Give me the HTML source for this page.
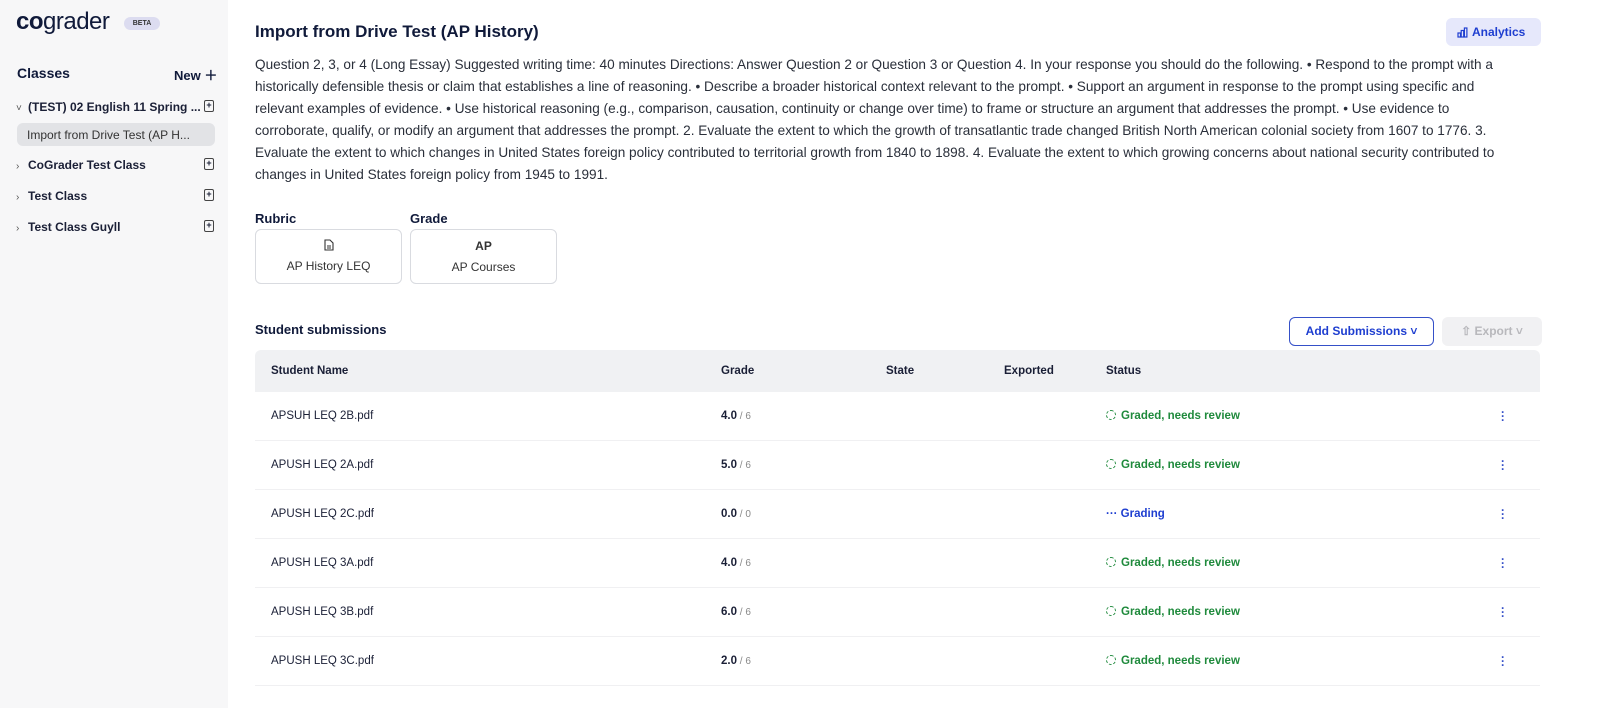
<!DOCTYPE html>
<html><head><meta charset="utf-8"><style>
*{box-sizing:border-box;margin:0;padding:0}
body{width:1600px;height:708px;overflow:hidden;background:#fff;font-family:"Liberation Sans",sans-serif;color:#1a1f36;position:relative}
.sb{position:absolute;left:0;top:0;width:228px;height:708px;background:#f7f7f8}
.logo{position:absolute;left:16px;top:8px;font-size:24px;color:#101a3a;letter-spacing:-0.5px}
.logo b{font-weight:700}
.beta{position:absolute;left:124px;top:17px;width:36px;height:13px;border-radius:7px;background:#dcdcf0;font-size:7px;font-weight:700;text-align:center;line-height:13px;color:#333}
.cls{position:absolute;left:17px;top:65px;font-size:14px;font-weight:700;color:#101a3a}
.new{position:absolute;left:174px;top:65px;font-size:13px;font-weight:700;color:#101a3a}
.it{position:absolute;left:16px;font-size:12px;font-weight:700;color:#1a1f36}
.it .ch{display:inline-block;width:12px;font-weight:400;color:#555;font-size:10px}
.fi{position:absolute;left:204px;width:10px;height:12px;border:1.3px solid #444;border-radius:2px;font-size:9px;line-height:9px;text-align:center;font-weight:700}
.sel{position:absolute;left:17px;top:123px;width:198px;height:23px;background:#e2e3e6;border-radius:6px;font-size:12px;padding:5px 10px;color:#333}
h1{position:absolute;left:255px;top:22px;font-size:17px;font-weight:700;color:#101a3a}
.an{position:absolute;left:1446px;top:18px;width:95px;height:28px;background:#e6e8fb;border-radius:6px;color:#1e3ed0;font-size:12px;font-weight:700;line-height:28px;padding-left:26px}
.p{position:absolute;left:255px;top:54px;font-size:13.6px;line-height:22px;color:#2a2f3a;white-space:nowrap}
.lab{position:absolute;font-size:13px;font-weight:700;color:#101a3a;top:211px}
.card{position:absolute;top:229px;width:147px;height:55px;border:1px solid #d9dbe0;border-radius:6px;text-align:center;font-size:12px;color:#333}
.ss{position:absolute;left:255px;top:322px;font-size:13px;font-weight:700;color:#101a3a}
.add{position:absolute;left:1289px;top:317px;width:145px;height:29px;border:1px solid #3550c8;border-radius:6px;color:#1e3ed0;font-size:12px;font-weight:700;line-height:27px;text-align:center}
.exp{position:absolute;left:1442px;top:317px;width:100px;height:29px;background:#f1f1f3;border-radius:6px;color:#b8b8bc;font-size:12px;font-weight:700;line-height:29px;text-align:center}
.tbl{position:absolute;left:255px;top:350px;width:1285px}
.hd{height:42px;background:#f0f1f3;border-radius:6px 6px 0 0;position:relative;font-size:11.5px;font-weight:700;color:#1a1f36}
.row{height:49px;border-bottom:1px solid #f0f0f2;position:relative;font-size:11.5px;color:#1a1f36}
.c{position:absolute;top:0;line-height:42px}
.row .c{line-height:48px}
.g b{font-weight:700}
.g span{color:#888;font-size:10px}
.st{color:#1f8a3c;font-weight:700}
.st i{display:inline-block;width:10px;height:10px;border:1.5px dashed #1f8a3c;border-radius:50%;vertical-align:-1px;margin-right:5px}
.gr{color:#1e3ed0;font-weight:700}
.dots{position:absolute;left:1246px;top:18px;color:#3550c8;font-size:12px;line-height:4px;width:4px;font-weight:700}
</style></head><body>
<div class="sb">
<div class="logo"><b>co</b>grader</div><div class="beta">BETA</div>
<div class="cls">Classes</div><div class="new">New ＋</div>
<div class="it" style="top:100px"><span class="ch">˅</span>(TEST) 02 English 11 Spring ...</div><div class="fi" style="top:100px">+</div>
<div class="sel">Import from Drive Test (AP H...</div>
<div class="it" style="top:158px"><span class="ch">›</span>CoGrader Test Class</div><div class="fi" style="top:158px">+</div>
<div class="it" style="top:189px"><span class="ch">›</span>Test Class</div><div class="fi" style="top:189px">+</div>
<div class="it" style="top:220px"><span class="ch">›</span>Test Class Guyll</div><div class="fi" style="top:220px">+</div>
</div>
<h1>Import from Drive Test (AP History)</h1>
<div class="an"><svg style="position:absolute;left:11px;top:9px" width="11" height="11" viewBox="0 0 11 11" fill="none" stroke="#1e3ed0" stroke-width="1.2"><rect x="1" y="6" width="2.5" height="4"/><rect x="4.2" y="3.5" width="2.5" height="6.5"/><rect x="7.4" y="1" width="2.5" height="9"/></svg>Analytics</div>
<div class="p">Question 2, 3, or 4 (Long Essay) Suggested writing time: 40 minutes Directions: Answer Question 2 or Question 3 or Question 4. In your response you should do the following. • Respond to the prompt with a<br>historically defensible thesis or claim that establishes a line of reasoning. • Describe a broader historical context relevant to the prompt. • Support an argument in response to the prompt using specific and<br>relevant examples of evidence. • Use historical reasoning (e.g., comparison, causation, continuity or change over time) to frame or structure an argument that addresses the prompt. • Use evidence to<br>corroborate, qualify, or modify an argument that addresses the prompt. 2. Evaluate the extent to which the growth of transatlantic trade changed British North American colonial society from 1607 to 1776. 3.<br>Evaluate the extent to which changes in United States foreign policy contributed to territorial growth from 1840 to 1898. 4. Evaluate the extent to which growing concerns about national security contributed to<br>changes in United States foreign policy from 1945 to 1991.</div>
<div class="lab" style="left:255px">Rubric</div><div class="lab" style="left:410px">Grade</div>
<div class="card" style="left:255px"><svg style="margin-top:9px" width="10" height="12" viewBox="0 0 10 12" fill="none" stroke="#333" stroke-width="1.1"><path d="M1 1h5l3 3v7H1z"/><path d="M3 7h4M3 9h4"/></svg><div style="margin-top:5px">AP History LEQ</div></div>
<div class="card" style="left:410px"><div style="margin-top:9px;font-weight:700">AP</div><div style="margin-top:7px">AP Courses</div></div>
<div class="ss">Student submissions</div>
<div class="add">Add Submissions ˅</div>
<div class="exp">⇧ Export ˅</div>
<div class="tbl">
<div class="hd"><div class="c" style="left:16px">Student Name</div><div class="c" style="left:466px">Grade</div><div class="c" style="left:631px">State</div><div class="c" style="left:749px">Exported</div><div class="c" style="left:851px">Status</div></div>
<div class="row"><div class="c" style="left:16px">APSUH LEQ 2B.pdf</div><div class="c g" style="left:466px"><b>4.0</b><span> / 6</span></div><div class="c st" style="left:851px"><i></i>Graded, needs review</div><div class="dots">·<br>·<br>·</div></div>
<div class="row"><div class="c" style="left:16px">APUSH LEQ 2A.pdf</div><div class="c g" style="left:466px"><b>5.0</b><span> / 6</span></div><div class="c st" style="left:851px"><i></i>Graded, needs review</div><div class="dots">·<br>·<br>·</div></div>
<div class="row"><div class="c" style="left:16px">APUSH LEQ 2C.pdf</div><div class="c g" style="left:466px"><b>0.0</b><span> / 0</span></div><div class="c gr" style="left:851px">··· Grading</div><div class="dots">·<br>·<br>·</div></div>
<div class="row"><div class="c" style="left:16px">APUSH LEQ 3A.pdf</div><div class="c g" style="left:466px"><b>4.0</b><span> / 6</span></div><div class="c st" style="left:851px"><i></i>Graded, needs review</div><div class="dots">·<br>·<br>·</div></div>
<div class="row"><div class="c" style="left:16px">APUSH LEQ 3B.pdf</div><div class="c g" style="left:466px"><b>6.0</b><span> / 6</span></div><div class="c st" style="left:851px"><i></i>Graded, needs review</div><div class="dots">·<br>·<br>·</div></div>
<div class="row"><div class="c" style="left:16px">APUSH LEQ 3C.pdf</div><div class="c g" style="left:466px"><b>2.0</b><span> / 6</span></div><div class="c st" style="left:851px"><i></i>Graded, needs review</div><div class="dots">·<br>·<br>·</div></div>
</div>
</body></html>
